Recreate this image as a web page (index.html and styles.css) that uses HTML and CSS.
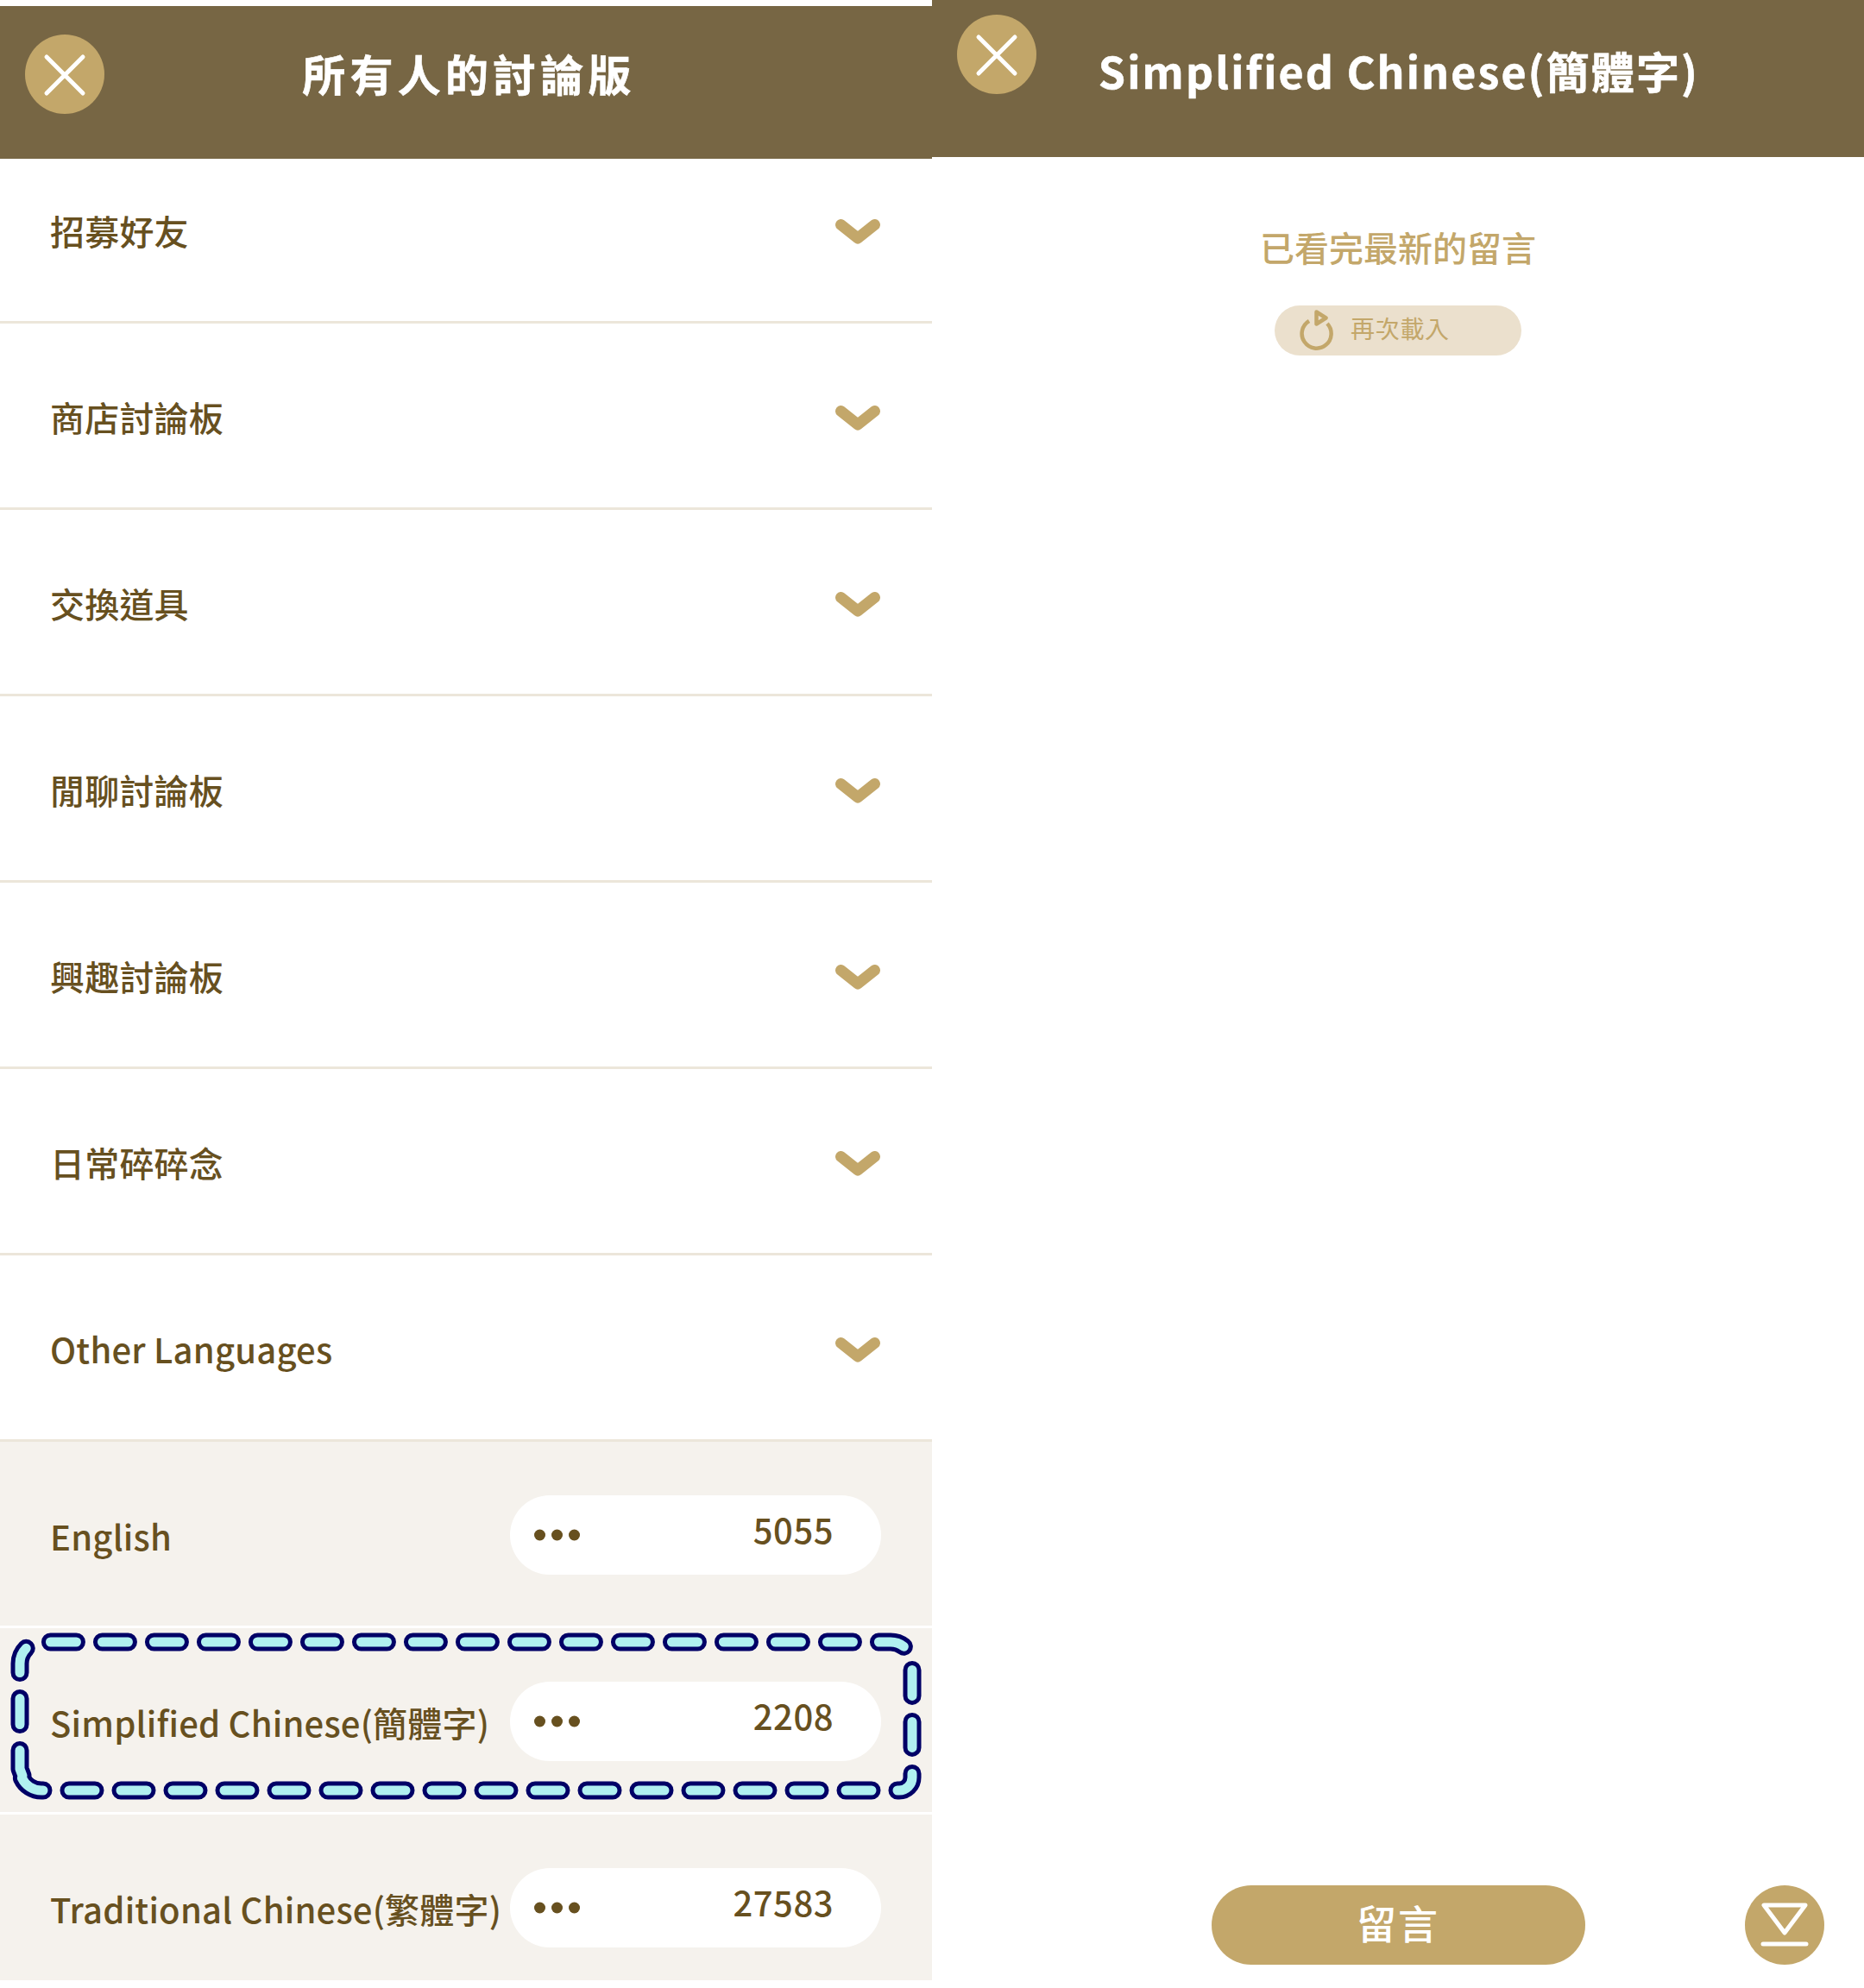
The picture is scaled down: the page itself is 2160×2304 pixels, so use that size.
FILE: index.html
```html
<!DOCTYPE html>
<html lang="zh-Hant">
<head>
    <meta charset="UTF-8">
    <title>所有人的討論版</title>
    <link rel="stylesheet" href="styles.css">
</head>
<body>
    <div class="page">
        <section class="panel board-panel">
            <header class="top-bar">
                <button class="close-btn">
                    <svg width="92" height="92" viewBox="0 0 92 92"><path d="M25 26 L67 68 M67 26 L25 68"/></svg>
                </button>
                <h1>所有人的討論版</h1>
            </header>

            <div class="cat-row"><span>招募好友</span><svg class="chevron" width="54" height="30" viewBox="0 0 54 30"><path d="M7.5 6.5 L27 22 L46.5 6.5"/></svg></div>
            <div class="cat-row"><span>商店討論板</span><svg class="chevron" width="54" height="30" viewBox="0 0 54 30"><path d="M7.5 6.5 L27 22 L46.5 6.5"/></svg></div>
            <div class="cat-row"><span>交換道具</span><svg class="chevron" width="54" height="30" viewBox="0 0 54 30"><path d="M7.5 6.5 L27 22 L46.5 6.5"/></svg></div>
            <div class="cat-row"><span>閒聊討論板</span><svg class="chevron" width="54" height="30" viewBox="0 0 54 30"><path d="M7.5 6.5 L27 22 L46.5 6.5"/></svg></div>
            <div class="cat-row"><span>興趣討論板</span><svg class="chevron" width="54" height="30" viewBox="0 0 54 30"><path d="M7.5 6.5 L27 22 L46.5 6.5"/></svg></div>
            <div class="cat-row"><span>日常碎碎念</span><svg class="chevron" width="54" height="30" viewBox="0 0 54 30"><path d="M7.5 6.5 L27 22 L46.5 6.5"/></svg></div>
            <div class="cat-row"><span>Other Languages</span><svg class="chevron" width="54" height="30" viewBox="0 0 54 30"><path d="M7.5 6.5 L27 22 L46.5 6.5"/></svg></div>

            <div class="sub-row">
                <span class="sub-name">English</span>
                <div class="count-pill">
                    <svg class="dots" width="53" height="14" viewBox="0 0 53 14"><circle cx="6.5" cy="7" r="6.5"/><circle cx="26.5" cy="7" r="6.5"/><circle cx="46.5" cy="7" r="6.5"/></svg>
                    <span class="count">5055</span>
                </div>
            </div>
            <div class="sub-row">
                <span class="sub-name">Simplified Chinese(簡體字)</span>
                <div class="count-pill">
                    <svg class="dots" width="53" height="14" viewBox="0 0 53 14"><circle cx="6.5" cy="7" r="6.5"/><circle cx="26.5" cy="7" r="6.5"/><circle cx="46.5" cy="7" r="6.5"/></svg>
                    <span class="count">2208</span>
                </div>
                <!-- highlight drawn over the row -->
                <svg class="dash-mark" width="1080" height="216" viewBox="0 0 1080 216">
                    <path class="dash-outer" d="M26 171 L23 163 V41 A25 25 0 0 1 48 16 H1032 A25 25 0 0 1 1057 41 V173 A15 15 0 0 1 1042 188 H48 A25 25 0 0 1 23 163"/>
                    <path class="dash-inner" d="M26 171 L23 163 V41 A25 25 0 0 1 48 16 H1032 A25 25 0 0 1 1057 41 V173 A15 15 0 0 1 1042 188 H48 A25 25 0 0 1 23 163"/>
                </svg>
            </div>
            <div class="sub-row">
                <span class="sub-name">Traditional Chinese(繁體字)</span>
                <div class="count-pill">
                    <svg class="dots" width="53" height="14" viewBox="0 0 53 14"><circle cx="6.5" cy="7" r="6.5"/><circle cx="26.5" cy="7" r="6.5"/><circle cx="46.5" cy="7" r="6.5"/></svg>
                    <span class="count">27583</span>
                </div>
            </div>
        </section>

        <section class="panel thread-panel">
            <header class="top-bar">
                <button class="close-btn">
                    <svg width="92" height="92" viewBox="0 0 92 92"><path d="M25 26 L67 68 M67 26 L25 68"/></svg>
                </button>
                <h1>Simplified Chinese(簡體字)</h1>
            </header>

            <p class="end-note">已看完最新的留言</p>
            <button class="reload-btn">
                <svg width="48" height="52" viewBox="0 0 48 52">
                    <path class="reload-ring" d="M15 15 A17 17 0 1 0 36 18"/>
                    <path class="reload-head" d="M23.5 4.5 L34.5 11.5 L23.5 18.5 Z"/>
                </svg>
                <span>再次載入</span>
            </button>

            <footer class="thread-foot">
                <button class="comment-btn">留言</button>
                <button class="bottom-btn">
                    <svg width="92" height="92" viewBox="0 0 92 92">
                        <path d="M22 23 H70 L46 55 Z M21 68 H71"/>
                    </svg>
                </button>
            </footer>
        </section>
    </div>
</body>
</html>
```

FILE: styles.css
```css
* {
    margin: 0;
    padding: 0;
    box-sizing: border-box;
}

body {
    font-family: "Noto Sans CJK TC", "Noto Sans", sans-serif;
    background: #fff;
    color: #67501f;
}

button {
    border: none;
    font-family: inherit;
}

.page {
    display: flex;
    width: 2160px;
    height: 2304px;
    overflow: hidden;
}

.panel {
    width: 1080px;
    display: flex;
    flex-direction: column;
}

.board-panel {
    padding-top: 7px;
}

.top-bar {
    flex: none;
    background: #776644;
    height: 177px;
    display: grid;
    grid-template-columns: 1fr auto 1fr;
    align-items: start;
}

.thread-panel .top-bar {
    height: 182px;
}

.top-bar h1 {
    grid-column: 2;
    grid-row: 1;
    color: #fff;
    font-size: 50px;
    font-weight: 700;
    letter-spacing: 5.2px;
    line-height: 70px;
    margin: 42px 0 0 7px;
    white-space: nowrap;
    -webkit-text-stroke: 0.6px #fff;
}

.thread-panel .top-bar h1 {
    letter-spacing: 2.15px;
    margin: 46px 0 0 2px;
}

.close-btn {
    grid-column: 1;
    grid-row: 1;
    justify-self: start;
    width: 92px;
    height: 92px;
    margin: 33px 0 0 29px;
    border-radius: 50%;
    background: #c3a76a;
}

.thread-panel .close-btn {
    margin-top: 17px;
}

.close-btn svg {
    display: block;
}

.close-btn path {
    stroke: #fff;
    stroke-width: 5;
    stroke-linecap: round;
    fill: none;
}

.cat-row {
    height: 216px;
    flex: none;
    display: flex;
    align-items: center;
    justify-content: space-between;
    padding: 3px 59px 0 58px;
    border-bottom: 3px solid #ece6da;
    font-size: 40px;
    font-weight: 500;
    letter-spacing: 0.2px;
}

.cat-row:nth-child(2) {
    height: 191px;
    padding-top: 0;
    padding-bottom: 22px;
}

.chevron {
    margin-top: 4px;
}

.chevron path {
    fill: none;
    stroke: #c3a76a;
    stroke-width: 13;
    stroke-linecap: round;
    stroke-linejoin: round;
}

.sub-row {
    position: relative;
    height: 216px;
    flex: none;
    display: flex;
    align-items: flex-start;
    justify-content: space-between;
    padding: 62px 59px 0 58px;
    background: #f5f2ed;
    border-bottom: 3px solid #fff;
    font-size: 40px;
    font-weight: 500;
}

.sub-row:last-child {
    height: 195px;
}

.sub-name {
    line-height: 92px;
    margin-top: 1px;
    letter-spacing: 0.2px;
    white-space: nowrap;
}

.count-pill {
    width: 430px;
    height: 92px;
    border-radius: 46px;
    background: #fff;
    display: flex;
    align-items: center;
    justify-content: space-between;
    padding: 0 55px 0 28px;
}

.dots circle {
    fill: #67501f;
}

.count {
    letter-spacing: 0.5px;
    margin-top: -14px;
}

.dash-mark {
    position: absolute;
    left: 0;
    top: 0;
    pointer-events: none;
}

.dash-mark path {
    fill: none;
    stroke-linecap: round;
    stroke-linejoin: round;
    stroke-dasharray: 30 30;
}

.dash-outer {
    stroke: #000066;
    stroke-width: 21;
}

.dash-inner {
    stroke: #b0f0f0;
    stroke-width: 11;
}

.end-note {
    margin-top: 76px;
    text-align: center;
    color: #c3a76a;
    font-size: 40px;
    font-weight: 500;
    line-height: 56px;
}

.reload-btn {
    flex: none;
    align-self: center;
    width: 286px;
    height: 58px;
    margin-top: 40px;
    border-radius: 29px;
    background: #ebe0cd;
    color: #c3a76a;
    display: flex;
    align-items: center;
    padding-left: 25px;
    gap: 15px;
    font-size: 28px;
    letter-spacing: 0.7px;
}

.reload-btn svg {
    flex: none;
}

.reload-btn span {
    margin-top: -6px;
}

.reload-ring {
    fill: none;
    stroke: #c3a76a;
    stroke-width: 4.5;
}

.reload-head {
    fill: none;
    stroke: #c3a76a;
    stroke-width: 4.5;
    stroke-linejoin: round;
}

.thread-foot {
    margin-top: auto;
    padding-bottom: 27px;
    display: grid;
    grid-template-columns: 1fr 433px 1fr;
    align-items: center;
}

.comment-btn {
    grid-column: 2;
    height: 92px;
    padding-bottom: 8px;
    border-radius: 46px;
    background: #c3a76a;
    color: #fff;
    font-size: 46px;
    font-weight: 500;
    letter-spacing: 2px;
}

.bottom-btn {
    grid-column: 3;
    justify-self: end;
    width: 92px;
    height: 92px;
    margin-right: 46px;
    border-radius: 50%;
    background: #c3a76a;
}

.bottom-btn svg {
    display: block;
}

.bottom-btn path {
    fill: none;
    stroke: #fff;
    stroke-width: 5;
    stroke-linecap: round;
    stroke-linejoin: round;
}
```
